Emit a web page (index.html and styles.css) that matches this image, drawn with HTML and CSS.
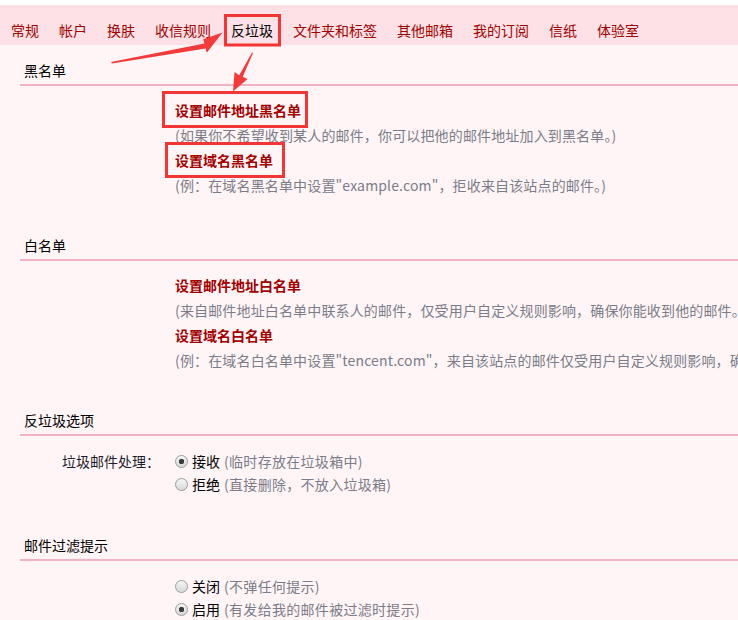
FILE: index.html
```html
<!DOCTYPE html>
<html lang="zh-CN">
<head>
<meta charset="utf-8">
<title>设置 - 反垃圾</title>
<link rel="stylesheet" href="styles.css">
</head>
<body>
<div class="page">
  <div class="topgap"></div>
  <nav class="tabs">
    <a class="tab">常规</a>
    <a class="tab">帐户</a>
    <a class="tab">换肤</a>
    <a class="tab">收信规则</a>
    <a class="tab tab-active">反垃圾</a>
    <a class="tab">文件夹和标签</a>
    <a class="tab">其他邮箱</a>
    <a class="tab">我的订阅</a>
    <a class="tab">信纸</a>
    <a class="tab">体验室</a>
  </nav>
  <main class="content">
    <section class="sec">
      <h2 class="sec-title">黑名单</h2>
      <div class="sec-body">
        <div class="row"><a class="link">设置邮件地址黑名单</a></div>
        <div class="row desc">(如果你不希望收到某人的邮件，你可以把他的邮件地址加入到黑名单。)</div>
        <div class="row"><a class="link">设置域名黑名单</a></div>
        <div class="row desc">(例：在域名黑名单中设置"example.com"，拒收来自该站点的邮件。)</div>
      </div>
    </section>
    <section class="sec">
      <h2 class="sec-title">白名单</h2>
      <div class="sec-body">
        <div class="row"><a class="link">设置邮件地址白名单</a></div>
        <div class="row desc">(来自邮件地址白名单中联系人的邮件，仅受用户自定义规则影响，确保你能收到他的邮件。)</div>
        <div class="row"><a class="link">设置域名白名单</a></div>
        <div class="row desc">(例：在域名白名单中设置"tencent.com"，来自该站点的邮件仅受用户自定义规则影响，确保你能收到他们的邮件。)</div>
      </div>
    </section>
    <section class="sec">
      <h2 class="sec-title">反垃圾选项</h2>
      <div class="opt-body">
        <div class="opt-label">垃圾邮件处理：</div>
        <div class="opt-list">
          <label class="opt"><span class="radio radio-on"></span><span class="opt-name">接收</span> <span class="opt-note">(临时存放在垃圾箱中)</span></label>
          <label class="opt"><span class="radio"></span><span class="opt-name">拒绝</span> <span class="opt-note">(直接删除，不放入垃圾箱)</span></label>
        </div>
      </div>
    </section>
    <section class="sec">
      <h2 class="sec-title">邮件过滤提示</h2>
      <div class="opt-body">
        <div class="opt-label"></div>
        <div class="opt-list">
          <label class="opt"><span class="radio"></span><span class="opt-name">关闭</span> <span class="opt-note">(不弹任何提示)</span></label>
          <label class="opt"><span class="radio radio-on"></span><span class="opt-name">启用</span> <span class="opt-note">(有发给我的邮件被过滤时提示)</span></label>
        </div>
      </div>
    </section>
  </main>
  <svg class="annot" width="738" height="620" viewBox="0 0 738 620" aria-hidden="true">
    <rect x="225.5" y="15.5" width="54" height="29.5" fill="none" stroke="#f23535" stroke-width="3"/>
    <rect x="163.5" y="92.5" width="143" height="34" fill="none" stroke="#f23535" stroke-width="3"/>
    <rect x="166.5" y="143.5" width="117" height="33" fill="none" stroke="#f23535" stroke-width="3"/>
    <polygon points="111,62 204.4,43.6 203.2,39.2 222.5,32.5 206.8,52.8 205.6,48.4 112,63.5" fill="#f23b3b"/>
    <polygon points="253,53 242.8,76.8 247.5,79 233,91.5 234.5,72 239.2,75.2 252,52.5" fill="#f23b3b"/>
  </svg>
</div>
</body>
</html>
```
FILE: styles.css
```css
html, body {
  margin: 0;
  padding: 0;
  overflow: hidden;
}
body {
  background: #fff5f7;
  font-family: "Noto Sans CJK SC", "Microsoft YaHei", sans-serif;
  font-size: 14px;
  color: #000;
}
.page {
  position: relative;
  width: 738px;
  height: 620px;
  overflow: hidden;
}
.topgap {
  height: 5px;
  background: #ffffff;
}
.tabs {
  height: 40px;
  box-sizing: border-box;
  background: #fde1e6;
  display: flex;
  align-items: flex-start;
  gap: 20px;
  padding: 15px 0 0 11px;
}
.tab {
  line-height: 20px;
  color: #a00000;
  white-space: nowrap;
  cursor: pointer;
}
.tab-active {
  color: #000;
}
.content {
  padding-top: 15px;
}
.sec {
  margin-left: 20px;
  white-space: nowrap;
}
.sec-title {
  margin: 0;
  font-size: 14px;
  font-weight: normal;
  line-height: 20px;
  padding: 0 0 4px 4px;
  border-bottom: 2px solid #f3b1c3;
  color: #000;
}
.sec-body {
  padding: 12px 0 37px 155px;
}
.row {
  line-height: 25px;
  height: 25px;
}
.link {
  color: #a00000;
  font-weight: bold;
  cursor: pointer;
}
.desc {
  color: #7c7c88;
  letter-spacing: 0.15px;
}
.opt-body {
  display: grid;
  grid-template-columns: 155px 1fr;
  padding: 14px 0 39px 0;
}
.opt-label {
  text-align: right;
  padding-right: 15px;
  line-height: 23px;
  color: #1e1e2a;
}
.opt {
  display: flex;
  align-items: center;
  height: 23px;
  line-height: 23px;
  color: #000;
}
.opt-note {
  color: #7c7c88;
  margin-left: 4px;
  letter-spacing: 0.3px;
}
.radio {
  width: 11px;
  height: 11px;
  border-radius: 50%;
  border: 1px solid #9a9a9a;
  background: linear-gradient(#f6f6f6, #d8d8d8);
  margin-right: 4px;
  flex: none;
}
.radio-on {
  background: radial-gradient(circle, #3c3c3c 0, #3c3c3c 2.5px, transparent 3px), linear-gradient(#f6f6f6, #d8d8d8);
}
.annot {
  position: absolute;
  top: 0;
  left: 0;
  pointer-events: none;
}
```
